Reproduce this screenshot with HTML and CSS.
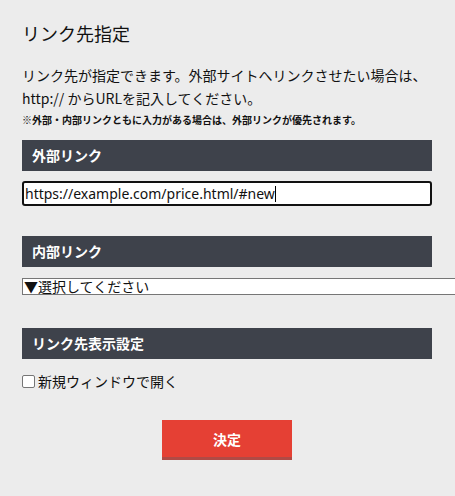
FILE: index.html
```html
<!DOCTYPE html>
<html lang="ja">
<head>
<meta charset="utf-8">
<title>リンク先指定</title>
<link rel="stylesheet" href="styles.css">
</head>
<body>
<div class="page">
  <h1 class="title">リンク先指定</h1>
  <p class="desc">リンク先が指定できます。外部サイトへリンクさせたい場合は、<br>http:// からURLを記入してください。</p>
  <p class="note">※外部・内部リンクともに入力がある場合は、外部リンクが優先されます。</p>

  <div class="bar bar-first">外部リンク</div>
  <div class="url-input">https://example.com/price.html/#new<span class="caret"></span></div>

  <div class="bar bar-second">内部リンク</div>
  <div class="select">▼選択してください</div>

  <div class="bar bar-third">リンク先表示設定</div>
  <label class="check-row"><span class="checkbox"></span>新規ウィンドウで開く</label>

  <div class="actions"><button class="submit" type="button">決定</button></div>
</div>
</body>
</html>
```

FILE: styles.css
```css
html, body {
  margin: 0;
  padding: 0;
  background: #ececec;
  overflow: hidden;
}
body {
  width: 455px;
  height: 496px;
  font-family: "Noto Sans CJK JP", "Noto Sans", sans-serif;
  color: #111;
}
.page {
  padding-left: 22px;
  width: 410px;
}
.title {
  margin: 0;
  padding-top: 20px;
  font-size: 18px;
  line-height: 26px;
  font-weight: 400;
}
.desc {
  margin: 18px 0 0;
  font-size: 14px;
  line-height: 23px;
}
.note {
  margin: 3px 0 0;
  font-size: 10px;
  line-height: 14px;
  font-weight: 700;
}
.bar {
  background: #3e424b;
  color: #fff;
  font-size: 14px;
  font-weight: 700;
  height: 31px;
  line-height: 31px;
  padding-left: 10px;
}
.bar-first { margin-top: 13px; }
.bar-second { margin-top: 30px; }
.bar-third { margin-top: 33px; }
.url-input {
  margin-top: 10px;
  height: 25px;
  box-sizing: border-box;
  border: 2px solid #111;
  border-radius: 3px;
  background: #fff;
  font-family: "Noto Sans", sans-serif;
  font-size: 14px;
  line-height: 20px;
  padding-left: 1px;
  display: flex;
  align-items: center;
  white-space: nowrap;
}
.caret {
  display: inline-block;
  width: 1px;
  height: 16px;
  background: #000;
}
.select {
  margin-top: 11px;
  width: 433px;
  height: 17px;
  box-sizing: border-box;
  border: 1px solid #767676;
  border-right: 0;
  background: #fff;
  font-size: 14px;
  line-height: 15px;
  padding-left: 1px;
  white-space: nowrap;
}
.check-row {
  margin-top: 12px;
  display: flex;
  align-items: center;
  font-size: 14px;
  line-height: 20px;
}
.checkbox {
  width: 13px;
  height: 13px;
  box-sizing: border-box;
  border: 1px solid #767676;
  border-radius: 2px;
  background: #fff;
  margin-right: 3px;
}
.actions {
  margin-top: 29px;
  display: flex;
  justify-content: center;
}
.submit {
  width: 130px;
  height: 40px;
  border: 0;
  border-bottom: 3px solid #b04a45;
  background: #e54034;
  color: #fff;
  font-family: "Noto Sans CJK JP", sans-serif;
  font-size: 14px;
  font-weight: 700;
  padding: 0;
}
```
